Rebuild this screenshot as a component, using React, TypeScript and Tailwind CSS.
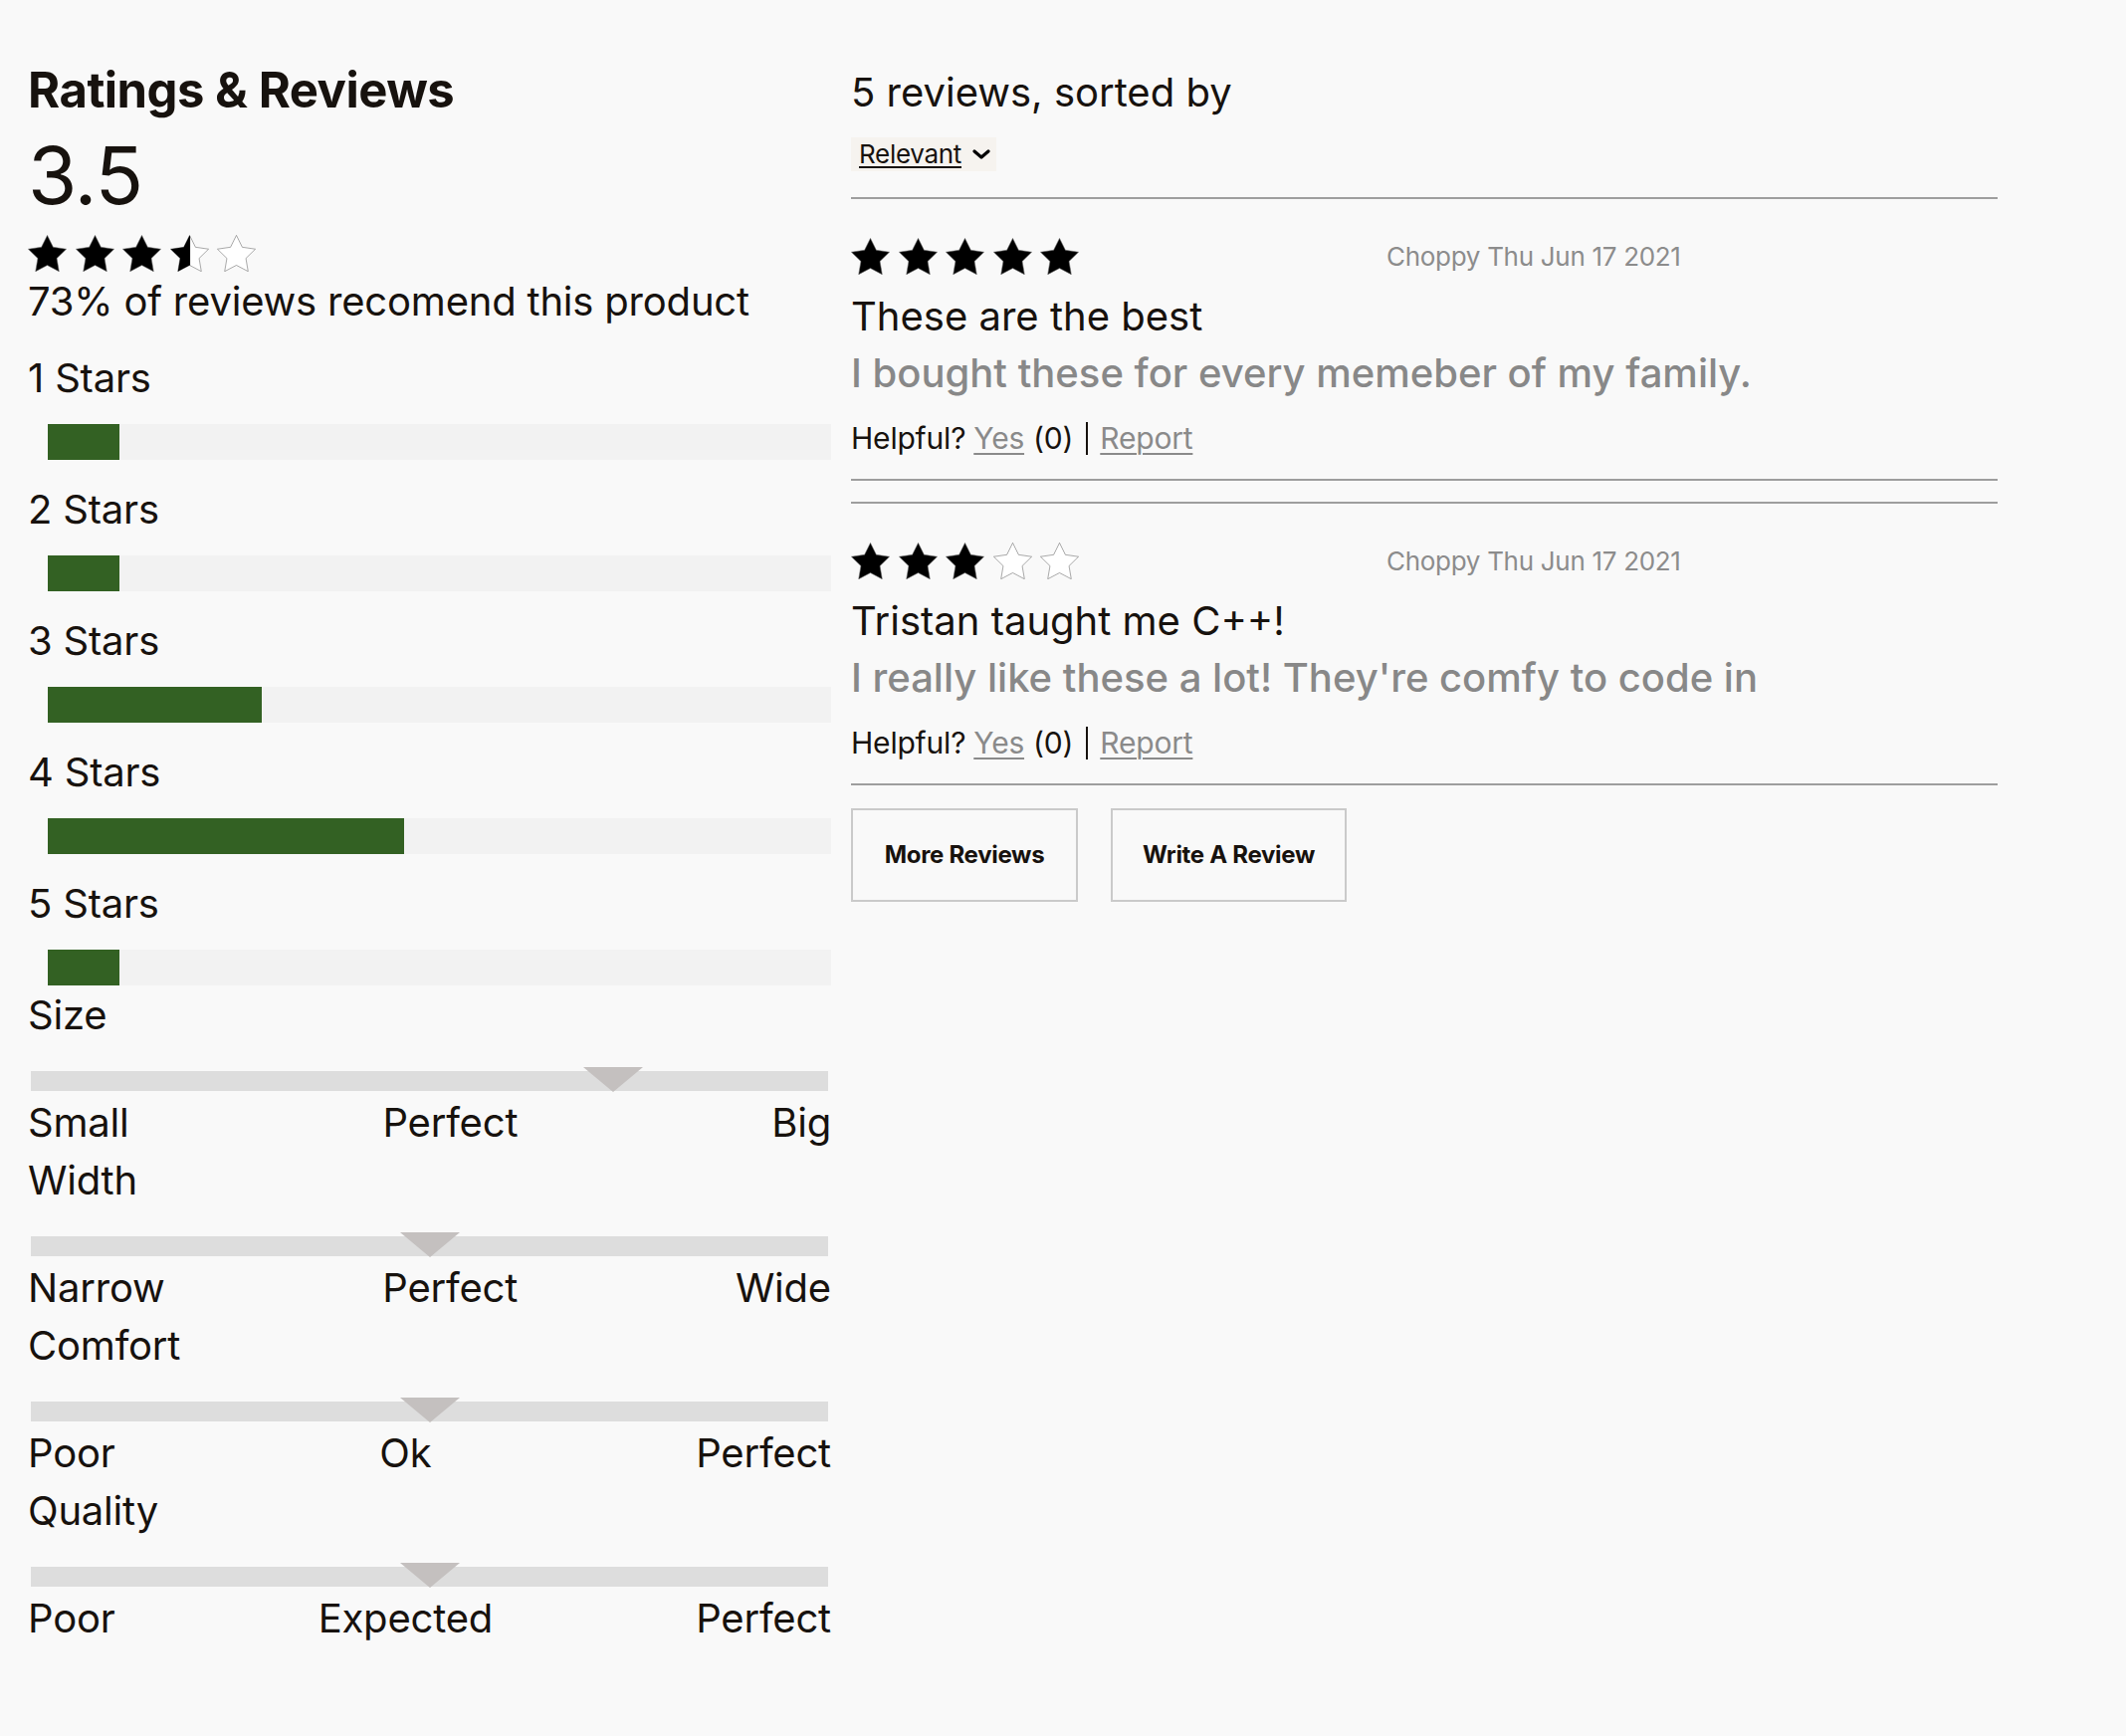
import React from 'react';

const STAR_POINTS = '12,2 15.09,8.26 22,9.27 17,14.14 18.18,21.02 12,17.77 5.82,21.02 7,14.14 2,9.27 8.91,8.26';

type StarFill = 'full' | 'half' | 'empty';

function Star({ fill }: { fill: StarFill }) {
    return (
        <svg viewBox="1.8 1.8 20.4 19.4" className="w-[39px] h-[37px] shrink-0">
            <defs>
                <clipPath id="half-star-clip">
                    <rect x="0" y="0" width="12.3" height="24" />
                </clipPath>
            </defs>
            <polygon points={STAR_POINTS} fill={fill === 'full' ? '#000' : '#fff'} stroke="#6b6b6b" strokeWidth={0.3} strokeLinejoin="miter" />
            {fill === 'half' && <polygon points={STAR_POINTS} fill="#000" clipPath="url(#half-star-clip)" />}
        </svg>
    );
}

function Stars({ rating }: { rating: number }) {
    const stars: StarFill[] = [1, 2, 3, 4, 5].map((n) => (rating >= n ? 'full' : rating >= n - 0.5 ? 'half' : 'empty'));
    return (
        <div className="flex items-center gap-[8.5px] h-[36px]">
            {stars.map((s, i) => (
                <Star key={i} fill={s} />
            ))}
        </div>
    );
}

const ratingCounts = [1, 1, 3, 5, 1];
const totalCount = ratingCounts.reduce((a, b) => a + b, 0);

const characteristics = [
    { name: 'Size', value: 73, labels: ['Small', 'Perfect', 'Big'] },
    { name: 'Width', value: 50, labels: ['Narrow', 'Perfect', 'Wide'] },
    { name: 'Comfort', value: 50, labels: ['Poor', 'Ok', 'Perfect'] },
    { name: 'Quality', value: 50, labels: ['Poor', 'Expected', 'Perfect'] },
];

const reviews = [
    { rating: 5, user: 'Choppy', date: 'Thu Jun 17 2021', summary: 'These are the best', body: 'I bought these for every memeber of my family.' },
    { rating: 3, user: 'Choppy', date: 'Thu Jun 17 2021', summary: 'Tristan taught me C++!', body: "I really like these a lot! They're comfy to code in" },
];

function RatingBreakdown() {
    return (
        <div className="w-[807px] shrink-0">
            <h2 className="text-[49px] leading-[49px] font-bold tracking-[-0.5px]">Ratings &amp; Reviews</h2>
            <div className="text-[80px] leading-[80px] mt-[21px] tracking-[-1px]">3.5</div>
            <div className="mt-[20px]">
                <Stars rating={3.5} />
            </div>
            <p className="text-[40px] leading-[40px] mt-[11px] tracking-[-0.2px]">73% of reviews recomend this product</p>
            <div className="mt-[7px]">
                {ratingCounts.map((count, i) => (
                    <div key={i} className="pt-[30px]">
                        <div className="text-[40px] leading-[40px] tracking-[-0.2px]">{i + 1} Stars</div>
                        <div className="mt-[26px] ml-[20px] h-[36px] bg-[#f2f2f2]">
                            <div className="h-full bg-[#336123]" style={{ width: `${(count / totalCount) * 100}%` }}></div>
                        </div>
                    </div>
                ))}
            </div>
            <div className="mt-[10px]">
                {characteristics.map((c) => (
                    <div key={c.name} className="pb-[18px]">
                        <div className="text-[40px] leading-[40px] tracking-[-0.2px]">{c.name}</div>
                        <div className="relative mt-[36px] mx-[3px] h-[20px] bg-[#dddddd]">
                            <div
                                className="absolute top-[-4px] w-0 h-0 border-l-[30px] border-r-[30px] border-t-[25px] border-l-transparent border-r-transparent border-t-[#c4c0bf]"
                                style={{ left: `calc(${c.value}% - 30px)` }}
                            ></div>
                        </div>
                        <div className="mt-[12px] flex justify-between text-[40px] leading-[40px] tracking-[-0.2px]">
                            {c.labels.map((l) => (
                                <span key={l}>{l}</span>
                            ))}
                        </div>
                    </div>
                ))}
            </div>
        </div>
    );
}

function ReviewTile({ review, first }: { review: (typeof reviews)[number]; first: boolean }) {
    return (
        <div className={`border-t-2 border-b-2 border-[#9e9e9e] pt-[39px] pb-[25px] ${first ? '' : 'mt-[21px]'}`}>
            <div className="flex items-center">
                <Stars rating={review.rating} />
                <span className="ml-[309px] text-[26px] leading-[27px] tracking-[-0.3px] text-[#8c8c8c]">
                    {review.user} {review.date}
                </span>
            </div>
            <h3 className="mt-[23px] text-[40px] leading-[40px]">{review.summary}</h3>
            <p className="mt-[17px] text-[40px] leading-[40px] font-medium text-[#888888]">{review.body}</p>
            <div className="mt-[29px] flex items-center text-[30px] leading-[32px] h-[32px] tracking-[-0.2px]">
                <span>Helpful?</span>
                <a href="#" className="ml-[8px] text-[#8a8a8a] underline underline-offset-[4px] decoration-[2px]">Yes</a>
                <span className="ml-[9px]">(0)</span>
                <span className="ml-[13px] w-[2px] h-[33px] bg-[#17120e]"></span>
                <a href="#" className="ml-[12px] text-[#8a8a8a] underline underline-offset-[4px] decoration-[2px]">Report</a>
            </div>
        </div>
    );
}

function ReviewList() {
    return (
        <div className="ml-[20px] w-[1152px] pt-[7px]">
            <div className="text-[40px] leading-[40px]">5 reviews, sorted by</div>
            <div className="mt-[25px] w-[146px] h-[34px] bg-[#f6f3ef] flex items-center pl-[8px] pr-[6px]">
                <span className="text-[26px] leading-[28px] tracking-[-0.3px] underline underline-offset-[3px] decoration-[2px]">Relevant</span>
                <svg viewBox="0 0 18 10" className="ml-auto w-[18px] h-[10px]">
                    <path d="M2 2 L9 8 L16 2" fill="none" stroke="#000" strokeWidth={3.2} strokeLinecap="round" strokeLinejoin="round" />
                </svg>
            </div>
            <div className="mt-[26px]">
                {reviews.map((r, i) => (
                    <ReviewTile key={i} review={r} first={i === 0} />
                ))}
            </div>
            <div className="mt-[23px] flex gap-[33px]">
                <button className="h-[94px] w-[228px] border-2 border-[#cacaca] text-[24px] font-bold tracking-[-0.3px]">More Reviews</button>
                <button className="h-[94px] w-[237px] border-2 border-[#cacaca] text-[24px] font-bold tracking-[-0.3px]">Write A Review</button>
            </div>
        </div>
    );
}

export default function App() {
    return (
        <div className="min-h-screen bg-[#f9f9f9] text-[#17120e] font-['Inter',_sans-serif]">
            <div className="flex pl-[28px] pt-[66px] pb-[60px]">
                <RatingBreakdown />
                <ReviewList />
            </div>
        </div>
    );
}
